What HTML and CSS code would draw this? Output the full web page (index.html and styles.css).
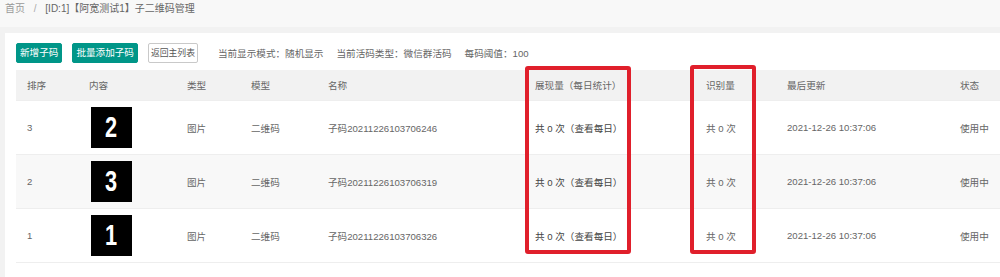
FILE: index.html
```html
<!DOCTYPE html>
<html lang="zh">

<head>
    <meta charset="UTF-8">
    <meta name="viewport" content="width=device-width, initial-scale=1.0">
    <title>子二维码管理</title>
    <link rel="stylesheet" href="styles.css">
</head>

<body>
    <div class="crumb">
        <span class="crumb-home">首页</span>
        <span class="crumb-sep">/</span>
        <span class="crumb-cur">[ID:1]【阿宽测试1】子二维码管理</span>
    </div>

    <div class="card">
        <div class="toolbar">
            <button class="btn">新增子码</button>
            <button class="btn">批量添加子码</button>
            <button class="btn btn-plain">返回主列表</button>
            <span class="info">当前显示模式：随机显示</span>
            <span class="info">当前活码类型：微信群活码</span>
            <span class="info">每码阈值：100</span>
        </div>

        <table class="list">
            <colgroup>
                <col style="width: 62px">
                <col style="width: 98px">
                <col style="width: 64px">
                <col style="width: 77px">
                <col style="width: 207px">
                <col style="width: 171px">
                <col style="width: 81px">
                <col style="width: 173px">
                <col>
            </colgroup>
            <thead>
                <tr>
                    <th>排序</th>
                    <th>内容</th>
                    <th>类型</th>
                    <th>模型</th>
                    <th>名称</th>
                    <th>展现量（每日统计）</th>
                    <th>识别量</th>
                    <th>最后更新</th>
                    <th>状态</th>
                </tr>
            </thead>
            <tbody>
                <tr>
                    <td>3</td>
                    <td><div class="thumb"><span>2</span></div></td>
                    <td>图片</td>
                    <td>二维码</td>
                    <td>子码20211226103706246</td>
                    <td class="stat">共 0 次（查看每日）</td>
                    <td>共 0 次</td>
                    <td>2021-12-26 10:37:06</td>
                    <td>使用中</td>
                </tr>
                <tr>
                    <td>2</td>
                    <td><div class="thumb"><span>3</span></div></td>
                    <td>图片</td>
                    <td>二维码</td>
                    <td>子码20211226103706319</td>
                    <td class="stat">共 0 次（查看每日）</td>
                    <td>共 0 次</td>
                    <td>2021-12-26 10:37:06</td>
                    <td>使用中</td>
                </tr>
                <tr>
                    <td>1</td>
                    <td><div class="thumb"><span>1</span></div></td>
                    <td>图片</td>
                    <td>二维码</td>
                    <td>子码20211226103706326</td>
                    <td class="stat">共 0 次（查看每日）</td>
                    <td>共 0 次</td>
                    <td>2021-12-26 10:37:06</td>
                    <td>使用中</td>
                </tr>
            </tbody>
        </table>
    </div>

    <!-- 标注框 -->
    <div class="mark mark-show"></div>
    <div class="mark mark-scan"></div>
</body>

</html>
```

FILE: styles.css
```css
html {
    overflow: hidden;
}

body {
    margin: 0;
    background: #f2f2f2;
    font-family: 'Liberation Sans', 'Noto Sans CJK SC', sans-serif;
    font-size: 9.6px;
    color: #666;
}

.crumb {
    height: 27px;
    line-height: 18px;
    padding-left: 5px;
    background: #f8f8f8;
    font-size: 10px;
}

.crumb-home {
    color: #999;
}

.crumb-sep {
    margin: 0 6px;
    color: #aaa;
}

.crumb-cur {
    color: #666;
}

.card {
    margin: 6px 0 0 5px;
    padding: 10px 0 0 11px;
    background: white;
    height: 234px;
}

.toolbar {
    display: flex;
    align-items: center;
    height: 20px;
    margin-bottom: 7px;
}

.btn {
    height: 20px;
    padding: 0 3px;
    margin-right: 10px;
    border: 1px solid #009688;
    border-radius: 2px;
    background-color: #009688;
    color: white;
    font-family: inherit;
    font-size: 9.6px;
    line-height: 18px;
    cursor: pointer;
}

.btn-plain {
    padding: 0 2px;
    margin-right: 20px;
    background-color: white;
    border-color: #c9c9c9;
    color: #555;
    font-size: 8.8px;
}

.info {
    margin-right: 13px;
    color: #666;
}

.list {
    width: 100%;
    border-collapse: collapse;
    table-layout: fixed;
}

.list th,
.list td {
    padding: 0 11px;
    text-align: left;
    font-weight: normal;
    white-space: nowrap;
    border-bottom: 1px solid #eee;
}

.list th {
    height: 30px;
    background: #f2f2f2;
    color: #666;
}

.list td {
    height: 53px;
}

.list tbody tr:nth-child(even) {
    background: #f8f8f8;
}

.list .stat {
    color: #444;
}

.thumb {
    width: 41px;
    height: 41px;
    margin-left: 2px;
    background: black;
    color: white;
    font-family: 'Liberation Sans', sans-serif;
    font-weight: bold;
    font-size: 29px;
    line-height: 41px;
    text-align: center;
}

.thumb span {
    display: inline-block;
    transform: scaleX(0.75);
}

.mark {
    position: absolute;
    border: 4px solid #e01f2b;
    border-radius: 3px;
    box-sizing: border-box;
}

.mark-show {
    left: 525px;
    top: 66px;
    width: 106px;
    height: 188px;
}

.mark-scan {
    left: 690px;
    top: 65px;
    width: 66px;
    height: 189px;
}
```
